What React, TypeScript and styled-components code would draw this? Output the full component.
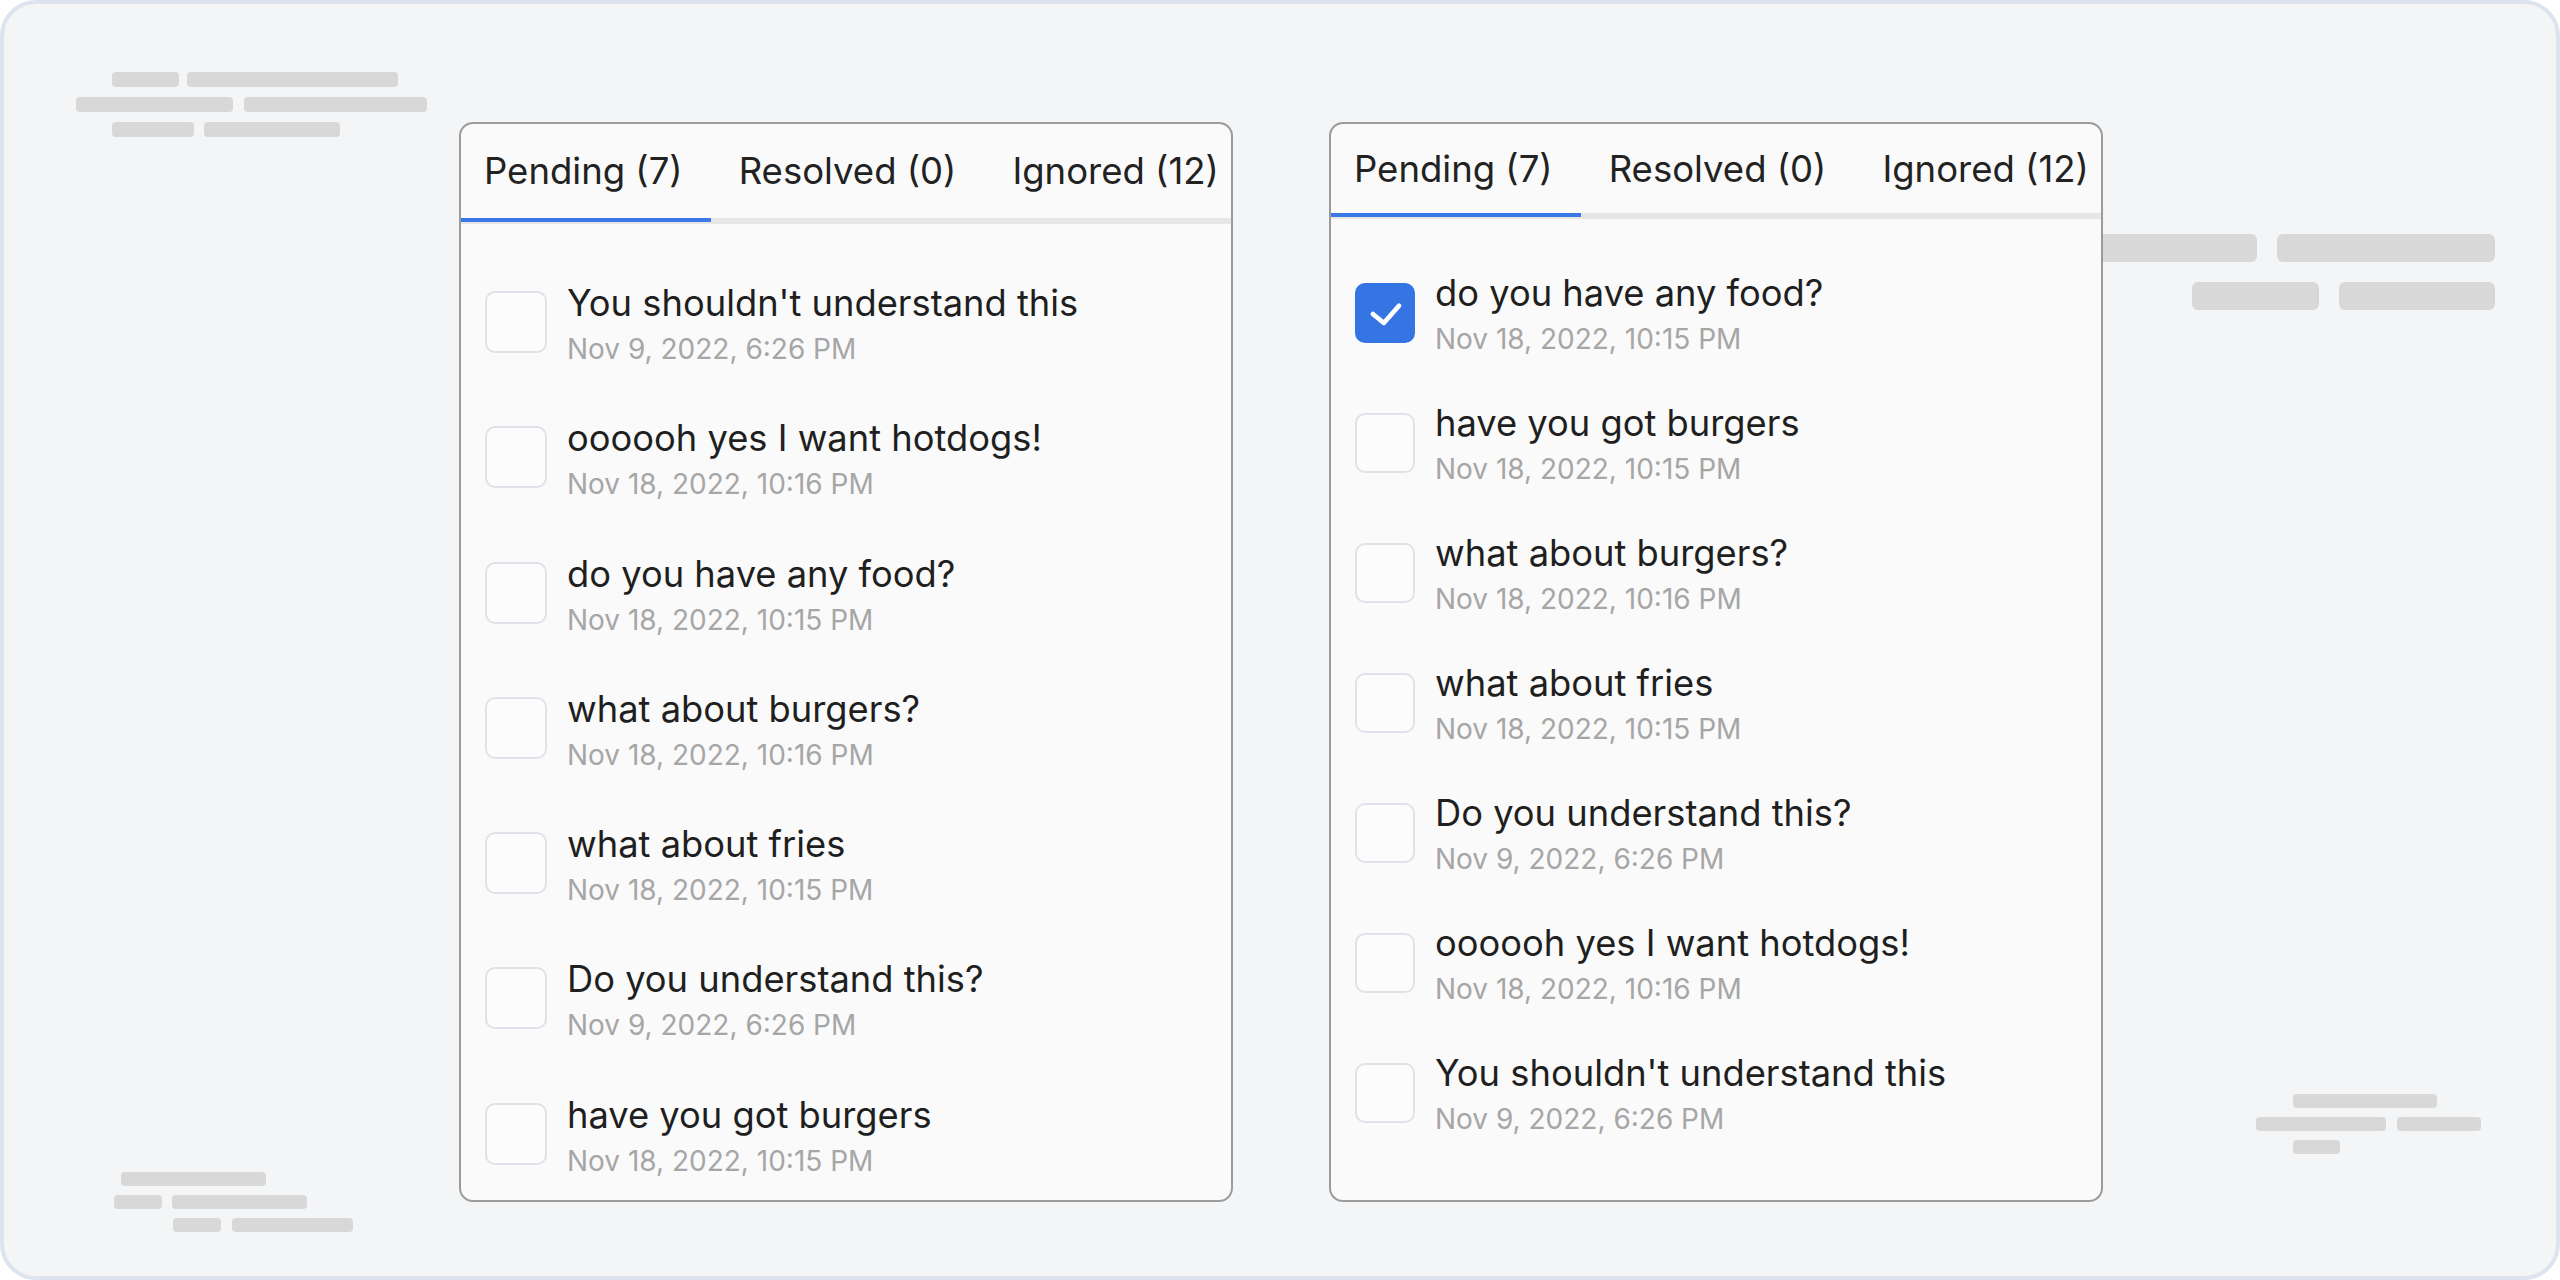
import React from "react";
import styled, { createGlobalStyle } from "styled-components";

const FONT = `Inter, "Noto Sans", sans-serif`;

const GlobalStyle = createGlobalStyle`
  html, body {
    margin: 0;
    padding: 0;
    background: #ffffff;
  }
  body {
    font-family: ${FONT};
  }
  * {
    box-sizing: border-box;
  }
`;

type Message = { text: string; date: string; checked?: boolean };

const leftMessages: Message[] = [
  { text: "You shouldn't understand this", date: "Nov 9, 2022, 6:26 PM" },
  { text: "oooooh yes I want hotdogs!", date: "Nov 18, 2022, 10:16 PM" },
  { text: "do you have any food?", date: "Nov 18, 2022, 10:15 PM" },
  { text: "what about burgers?", date: "Nov 18, 2022, 10:16 PM" },
  { text: "what about fries", date: "Nov 18, 2022, 10:15 PM" },
  { text: "Do you understand this?", date: "Nov 9, 2022, 6:26 PM" },
  { text: "have you got burgers", date: "Nov 18, 2022, 10:15 PM" },
];

const rightMessages: Message[] = [
  { text: "do you have any food?", date: "Nov 18, 2022, 10:15 PM", checked: true },
  { text: "have you got burgers", date: "Nov 18, 2022, 10:15 PM" },
  { text: "what about burgers?", date: "Nov 18, 2022, 10:16 PM" },
  { text: "what about fries", date: "Nov 18, 2022, 10:15 PM" },
  { text: "Do you understand this?", date: "Nov 9, 2022, 6:26 PM" },
  { text: "oooooh yes I want hotdogs!", date: "Nov 18, 2022, 10:16 PM" },
  { text: "You shouldn't understand this", date: "Nov 9, 2022, 6:26 PM" },
];

const tabs = ["Pending (7)", "Resolved (0)", "Ignored (12)"];

// skeleton decorations: rows of grey bars scattered around the frame
type Deco = { left: number; top: number; barHeight: number; rowGap: number; rows: { offset: number; gap: number; bars: number[] }[] };

const decorations: Deco[] = [
  {
    left: 72, top: 68, barHeight: 15, rowGap: 10,
    rows: [
      { offset: 36, gap: 8, bars: [67, 211] },
      { offset: 0, gap: 11, bars: [157, 183] },
      { offset: 36, gap: 10, bars: [82, 136] },
    ],
  },
  {
    left: 2056, top: 230, barHeight: 28, rowGap: 20,
    rows: [
      { offset: 0, gap: 20, bars: [197, 218] },
      { offset: 132, gap: 20, bars: [127, 156] },
    ],
  },
  {
    left: 2252, top: 1090, barHeight: 14, rowGap: 9,
    rows: [
      { offset: 37, gap: 11, bars: [144] },
      { offset: 0, gap: 11, bars: [130, 84] },
      { offset: 37, gap: 11, bars: [47] },
    ],
  },
  {
    left: 110, top: 1168, barHeight: 14, rowGap: 9,
    rows: [
      { offset: 7, gap: 10, bars: [145] },
      { offset: 0, gap: 10, bars: [48, 135] },
      { offset: 59, gap: 11, bars: [48, 121] },
    ],
  },
];

function CheckMark() {
  return (
    <svg width="100%" height="100%" viewBox="0 0 60 58">
      <polyline points="17,30 28.7,39.7 45,21.3" fill="none" stroke="#ffffff" strokeWidth="5" strokeLinecap="round" strokeLinejoin="round" />
    </svg>
  );
}

type CardProps = {
  items: Message[];
  tabHeight: number;
  listTop: number;
  rowGap: number;
  box: number;
  boxTop: number;
};

function InboxCard({ items, tabHeight, listTop, rowGap, box, boxTop }: CardProps) {
  return (
    <Card>
      <TabBar $height={tabHeight}>
        {tabs.map((t, i) => (
          <Tab key={t} $active={i === 0}>
            {t}
          </Tab>
        ))}
      </TabBar>
      <List $top={listTop} $gap={rowGap}>
        {items.map((m, i) => (
          <Row key={i}>
            <CheckBox $checked={!!m.checked} $size={box} $top={boxTop}>
              {m.checked && <CheckMark />}
            </CheckBox>
            <TextBlock>
              <Title>{m.text}</Title>
              <DateText>{m.date}</DateText>
            </TextBlock>
          </Row>
        ))}
      </List>
    </Card>
  );
}

export default function App() {
  return (
    <>
      <GlobalStyle />
      <Frame>
        {decorations.map((d, i) => (
          <DecoGroup key={i} style={{ left: d.left, top: d.top }} $gap={d.rowGap}>
            {d.rows.map((r, j) => (
              <DecoRow key={j} $offset={r.offset} $gap={r.gap}>
                {r.bars.map((w, k) => (
                  <Bar key={k} $h={d.barHeight} style={{ width: w }} />
                ))}
              </DecoRow>
            ))}
          </DecoGroup>
        ))}
        <InboxCard items={leftMessages} tabHeight={100} listTop={55} rowGap={47.3} box={62} boxTop={12} />
        <InboxCard items={rightMessages} tabHeight={95} listTop={50} rowGap={42} box={60} boxTop={14} />
      </Frame>
    </>
  );
}

const Frame = styled.div`
  position: relative;
  width: 2560px;
  height: 1280px;
  border: 4px solid #dde4f0;
  border-radius: 36px;
  background: #f4f5f7;
  overflow: hidden;
  display: flex;
  align-items: flex-start;
  gap: 96px;
  padding: 118px 0 0 455px;
`;

const DecoGroup = styled.div<{ $gap: number }>`
  position: absolute;
  display: flex;
  flex-direction: column;
  gap: ${(p) => p.$gap}px;
`;

const DecoRow = styled.div<{ $offset: number; $gap: number }>`
  display: flex;
  gap: ${(p) => p.$gap}px;
  padding-left: ${(p) => p.$offset}px;
`;

const Bar = styled.div<{ $h: number }>`
  height: ${(p) => p.$h}px;
  border-radius: ${(p) => (p.$h > 20 ? 6 : 4)}px;
  background: #d8d8d8;
`;

const Card = styled.div`
  position: relative;
  z-index: 1;
  width: 774px;
  height: 1080px;
  border: 2px solid #9b9b9b;
  border-radius: 14px;
  background: #fafafa;
  overflow: hidden;
  display: flex;
  flex-direction: column;
`;

const TabBar = styled.div<{ $height: number }>`
  display: flex;
  flex-shrink: 0;
  height: ${(p) => p.$height}px;
  background: linear-gradient(#e6e6e6, #e6e6e6) left bottom / 100% 6px no-repeat;
`;

const Tab = styled.div<{ $active: boolean }>`
  display: flex;
  align-items: center;
  flex-shrink: 0;
  height: calc(100% - 2px);
  padding: 0 28px;
  font-size: 36.5px;
  color: #222222;
  white-space: nowrap;
  border-bottom: 4px solid ${(p) => (p.$active ? "#3a78e5" : "transparent")};

  &:first-child {
    padding-left: 23px;
  }
`;

const List = styled.div<{ $top: number; $gap: number }>`
  display: flex;
  flex-direction: column;
  gap: ${(p) => p.$gap}px;
  padding: ${(p) => p.$top}px 24px 0 24px;
`;

const Row = styled.div`
  display: flex;
  align-items: flex-start;
  gap: 20px;
`;

const CheckBox = styled.div<{ $checked: boolean; $size: number; $top: number }>`
  flex-shrink: 0;
  width: ${(p) => p.$size}px;
  height: ${(p) => p.$size}px;
  margin-top: ${(p) => p.$top}px;
  border-radius: 10px;
  border: 2px solid ${(p) => (p.$checked ? "#3574e3" : "#dfe2e8")};
  background: ${(p) => (p.$checked ? "#3574e3" : "#fcfcfc")};
  display: flex;
`;

const TextBlock = styled.div`
  display: flex;
  flex-direction: column;
`;

const Title = styled.div`
  padding-top: 2px;
  font-size: 36.3px;
  line-height: 44px;
  color: #1f1f1f;
  white-space: nowrap;
`;

const DateText = styled.div`
  margin-top: 6px;
  font-size: 28px;
  line-height: 36px;
  color: #a6a6a6;
  white-space: nowrap;
`;
